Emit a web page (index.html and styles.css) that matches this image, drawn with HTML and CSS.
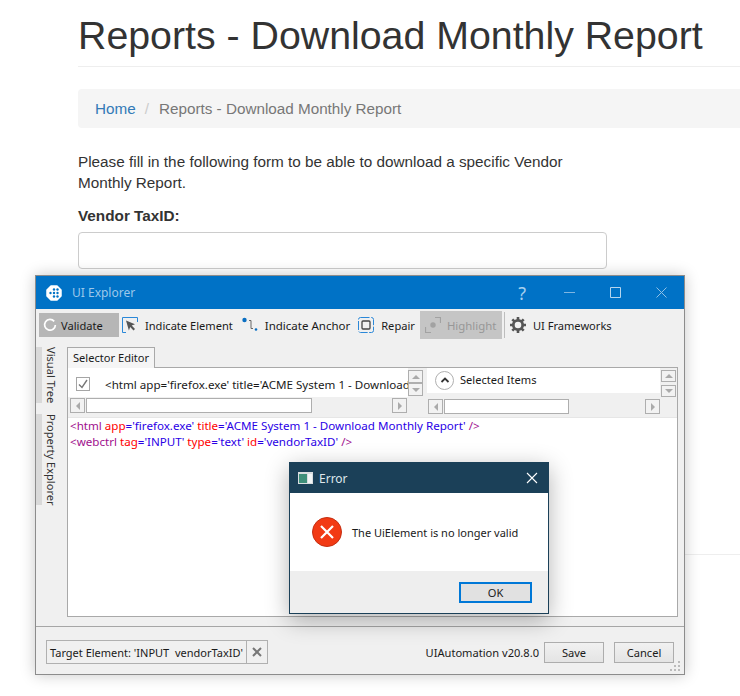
FILE: index.html
```html
<!DOCTYPE html>
<html lang="en">
<head>
<meta charset="utf-8">
<title>Reports - Download Monthly Report</title>
<link rel="stylesheet" href="styles.css">
</head>
<body>
<main class="page">
  <h1 class="page-title">Reports - Download Monthly Report</h1>
  <nav class="breadcrumb"><a class="crumb-link" href="#">Home</a><span class="crumb-sep">/</span><span class="crumb-current">Reports - Download Monthly Report</span></nav>
  <p class="intro">Please fill in the following form to be able to download a specific Vendor<br>Monthly Report.</p>
  <label class="field-label">Vendor TaxID:</label>
  <div class="field-input"></div>
</main>
<div class="page-rule"></div>

<section class="win explorer">
  <header class="titlebar">
    <svg class="app-logo" viewBox="0 0 16 16" width="16" height="16"><path d="M5 1h6l4 4v6l-4 4H5l-4-4V5z" fill="#fff" stroke="#fff" stroke-width="1.500" stroke-linejoin="round"/><g fill="#0072c6"><circle cx="8" cy="4.500" r="1.200"/><circle cx="11.500" cy="4.500" r="1.200"/><circle cx="4.500" cy="8" r="1.200"/><circle cx="8" cy="8" r="1.200"/><circle cx="11.500" cy="8" r="1.200"/><circle cx="8" cy="11.500" r="1.200"/><circle cx="11.500" cy="11.500" r="1.200"/></g></svg>
    <span class="win-title">UI Explorer</span>
    <span class="win-help">?</span>
    <svg class="win-ctl min" viewBox="0 0 11 11" width="11" height="11"><path d="M0 5.500h11" stroke="#7fb6e2" fill="none"/></svg>
    <svg class="win-ctl max" viewBox="0 0 11 11" width="11" height="11"><path d="M.5.500h10v10H.5z" stroke="#b5d5ee" fill="none"/></svg>
    <svg class="win-ctl close" viewBox="0 0 11 11" width="11" height="11"><path d="M.5.500l10 10M10.500.500l-10 10" stroke="#8fc0e6" fill="none"/></svg>
  </header>
  <div class="toolbar">
    <div class="tool tool-validate">
      <svg viewBox="0 0 14 14" width="14" height="14"><path d="M11.200 3.400A5.400 5.400 0 1 0 12.400 7" stroke="#fff" stroke-width="1.700" fill="none"/></svg>
      <span>Validate</span>
    </div>
    <div class="tool tool-element">
      <svg viewBox="0 0 16 16" width="16" height="16"><path d="M4 15.500H.5V.5h15V5" stroke="#2b88d8" fill="none"/><path d="M4 3.500l9 3.800-3.300 1.300 3.300 3.300-1.500 1.500-3.300-3.300-1.300 3.300z" fill="#555"/></svg>
      <span>Indicate Element</span>
    </div>
    <div class="tool tool-anchor">
      <svg viewBox="0 0 16 16" width="16" height="16"><circle cx="2.500" cy="3" r="2.200" fill="#0a6fc2"/><path d="M7 3.500h2v8h2" stroke="#666" fill="none"/><circle cx="14" cy="12.500" r="1.300" fill="#0a6fc2"/></svg>
      <span>Indicate Anchor</span>
    </div>
    <div class="tool tool-repair">
      <svg viewBox="0 0 16 16" width="16" height="16"><rect x=".5" y=".5" width="15" height="15" rx="2" stroke="#2b88d8" fill="none" stroke-dasharray="9 1.500"/><rect x="4" y="4" width="8" height="8" rx="1" stroke="#444" stroke-width="1.300" fill="none"/></svg>
      <span>Repair</span>
    </div>
    <div class="tool tool-highlight">
      <svg viewBox="0 0 16 16" width="16" height="16"><path d="M.5 10v5.500H6M10 .5h5.500V6" stroke="#a2a2a2" stroke-width="1.200" fill="none"/><circle cx="8" cy="8" r="2.700" fill="#a2a2a2"/></svg>
      <span>Highlight</span>
    </div>
    <div class="tool-sep"></div>
    <div class="tool tool-frameworks">
      <svg viewBox="0 0 16 16" width="16" height="16"><circle cx="8" cy="8" r="4.700" fill="none" stroke="#555" stroke-width="2.800"/><g stroke="#555" stroke-width="2.600"><path d="M8 0v3M8 13v3M0 8h3M13 8h3M2.300 2.300l2.100 2.100M11.600 11.600l2.100 2.100M13.700 2.300l-2.100 2.100M4.400 11.600l-2.100 2.100"/></g></svg>
      <span>UI Frameworks</span>
    </div>
  </div>
  <div class="explorer-body">
    <aside class="side-tabs">
      <div class="side-tab side-tree"><span>Visual Tree</span></div>
      <div class="side-tab side-prop"><span>Property Explorer</span></div>
    </aside>
    <div class="editor">
      <div class="tab">Selector Editor</div>
      <div class="editor-box">
        <div class="panes">
          <div class="pane pane-left">
            <div class="pane-row">
              <div class="row-white row-selector">
                <span class="check"><svg viewBox="0 0 14 14" width="14" height="14"><path d="M3 7.500l3 3 5-7.500" stroke="#777" stroke-width="1.400" fill="none"/></svg></span>
                <span class="selector-text">&lt;html app='firefox.exe' title='ACME System 1 - Download Monthly Report' /&gt;</span>
              </div>
              <div class="vscroll"><span class="sbtn"><i class="tri up"></i></span><span class="sbtn"><i class="tri down"></i></span></div>
            </div>
            <div class="hscroll hs-left"><span class="sbtn"><i class="tri left"></i></span><span class="thumb thumb-left"></span><span class="hs-fill"></span><span class="sbtn"><i class="tri right"></i></span></div>
          </div>
          <div class="pane pane-right">
            <div class="pane-row">
              <div class="row-white row-items">
                <span class="chev"><svg viewBox="0 0 10 8" width="10" height="8"><path d="M1.500 6l3.500-3.500L8.500 6" stroke="#333" stroke-width="1.800" fill="none"/></svg></span>
                <span class="items-label">Selected Items</span>
              </div>
              <div class="vscroll vs-right"><span class="sbtn"><i class="tri up"></i></span><span class="sbtn"><i class="tri down"></i></span></div>
            </div>
            <div class="hscroll hs-right"><span class="sbtn"><i class="tri left"></i></span><span class="thumb thumb-right"></span><span class="hs-fill"></span><span class="sbtn"><i class="tri right"></i></span></div>
          </div>
        </div>
        <div class="code">
          <div><b class="k-tag">&lt;html</b> <b class="k-attr">app</b><b class="k-val">='firefox.exe'</b> <b class="k-attr">title</b><b class="k-val">='ACME System 1 - Download Monthly Report'</b> <b class="k-tag">/&gt;</b></div>
          <div><b class="k-tag">&lt;webctrl</b> <b class="k-attr">tag</b><b class="k-val">='INPUT'</b> <b class="k-attr">type</b><b class="k-val">='text'</b> <b class="k-attr">id</b><b class="k-val">='vendorTaxID'</b> <b class="k-tag">/&gt;</b></div>
        </div>
      </div>
    </div>
  </div>
  <footer class="footer">
    <div class="target"><span class="target-text">Target Element: 'INPUT&nbsp; vendorTaxID'</span><span class="target-x"><svg viewBox="0 0 10 10" width="10" height="10"><path d="M1 1l8 8M9 1l-8 8" stroke="#777" stroke-width="2" fill="none"/></svg></span></div>
    <span class="version">UIAutomation v20.8.0</span>
    <button class="btn btn-save">Save</button>
    <button class="btn btn-cancel">Cancel</button>
    <svg class="grip" viewBox="0 0 10 10" width="10" height="10"><g fill="#bbb"><rect x="8" y="0" width="2" height="2"/><rect x="4" y="4" width="2" height="2"/><rect x="8" y="4" width="2" height="2"/><rect x="0" y="8" width="2" height="2"/><rect x="4" y="8" width="2" height="2"/><rect x="8" y="8" width="2" height="2"/></g></svg>
  </footer>
</section>

<section class="win dialog">
  <header class="dlg-title">
    <svg class="dlg-icon" viewBox="0 0 15 12" width="15" height="12"><rect width="15" height="12" fill="#d9dde0"/><rect x="1" y="2" width="8" height="9" fill="#3f8f7a"/><rect x="10" y="2" width="4" height="9" fill="#f2f5f6"/></svg>
    <span class="dlg-name">Error</span>
    <svg class="dlg-close" viewBox="0 0 12 12" width="12" height="12"><path d="M1 1l10 10M11 1l-10 10" stroke="#fff" stroke-width="1.100" fill="none"/></svg>
  </header>
  <div class="dlg-body">
    <svg class="err-icon" viewBox="0 0 30 30" width="30" height="30"><circle cx="15" cy="15" r="14.500" fill="#f23a14" stroke="#c42f12"/><path d="M9 9l12 12M21 9L9 21" stroke="#fff" stroke-width="2.200" fill="none"/></svg>
    <span class="dlg-msg">The UiElement is no longer valid</span>
  </div>
  <div class="dlg-foot"><button class="btn-ok">OK</button></div>
</section>
</body>
</html>
```
FILE: styles.css
```css
html, body { margin: 0; padding: 0; }
body {
  width: 740px; height: 696px; overflow: hidden; position: relative;
  background: #fff; color: #333;
  font-family: "Liberation Sans", Arial, sans-serif;
}
.page { padding-left: 78px; }
.page-title {
  margin: 0; box-sizing: border-box; padding-top: 14px; height: 67px;
  font-size: 39.300px; line-height: 43px; font-weight: 400; color: #333;
  border-bottom: 1px solid #eee;
}
.breadcrumb {
  margin-top: 22px; height: 39px; display: flex; align-items: center;
  padding-left: 17px; background: #f5f5f5; border-radius: 4px 0 0 4px;
  font-size: 15.250px;
}
.crumb-link { color: #337ab7; text-decoration: none; }
.crumb-sep { color: #ccc; margin: 0 10px 0 9px; }
.crumb-current { color: #777; }
.intro { margin: 23px 0 0; font-size: 15.300px; line-height: 21px; color: #333; }
.field-label { display: block; margin-top: 12px; font-size: 15.300px; line-height: 21px; font-weight: 700; }
.field-input {
  margin-top: 6px; width: 529px; height: 37px; box-sizing: border-box;
  border: 1px solid #ccc; border-radius: 4px; background: #fff;
}
.page-rule { position: absolute; left: 600px; right: 0; top: 554px; height: 1px; background: #eee; }

.win, .win button { font-family: "Noto Sans", "Open Sans", sans-serif; }
.win {
  position: absolute; box-sizing: border-box;
  font-size: 11.100px; color: #1a1a1a;
}
.explorer {
  left: 35px; top: 275px; width: 650px; height: 400px;
  border: 1px solid #8c8c8c; background: #f0f0f0;
  box-shadow: 0 0 14px rgba(0,0,0,.22);
  display: flex; flex-direction: column;
}
.titlebar {
  height: 33px; flex: none; background: #0072c6; display: flex; align-items: center;
  padding-left: 10px; color: #9cc8ea;
}
.win-title { margin-left: 10px; font-size: 12px; }
.win-help { margin-left: auto; font-size: 18px; line-height: 20px; color: #a6cfee; }
.win-ctl { flex: none; }
.min { margin-left: 38px; }
.max { margin-left: 35px; }
.close { margin-left: 35px; margin-right: 17px; }

.toolbar { height: 37px; box-sizing: border-box; padding: 0 0 5px 3px; flex: none; display: flex; align-items: center; }
.tool { display: flex; align-items: center; white-space: nowrap; box-sizing: border-box; }
.tool-validate { width: 80px; height: 24px; background: #b6b6b6; padding-left: 4px; gap: 4px; }
.tool-element { margin-left: 3px; gap: 7px; }
.tool-anchor { margin-left: 9px; gap: 7px; font-size: 11.500px; }
.tool-repair { margin-left: 8px; gap: 7px; }
.tool-highlight { margin-left: 5px; width: 82px; height: 28px; background: #c5c5c5; color: #979797; padding-left: 5px; gap: 6px; font-size: 11.400px; }
.tool-sep { width: 1px; height: 26px; background: #bdbdbd; margin-left: 2px; }
.tool-frameworks { margin-left: 5px; gap: 7px; }

.explorer-body { flex: 1; display: flex; min-height: 0; }
.side-tabs { width: 31px; flex: none; padding-top: 1px; }
.side-tab {
  box-sizing: border-box; width: 21px; padding-left: 3px; display: flex; align-items: center;
  border-left: 6px solid #d9d9d9; writing-mode: vertical-rl; white-space: nowrap; color: #333;
}
.side-tree { height: 56px; }
.side-prop { height: 91px; margin-top: 11px; }
.editor { flex: 1; margin-right: 6px; display: flex; flex-direction: column; min-width: 0; padding-top: 1px; }
.tab {
  align-self: flex-start; width: 88px; height: 21px; box-sizing: border-box; padding: 0 5px; line-height: 20px;
  white-space: nowrap; background: #f5f5f5; border: 1px solid #a9a9a9; border-bottom: 0;
  position: relative; z-index: 1; margin-bottom: -1px;
}
.editor-box { height: 251px; box-sizing: border-box; border: 1px solid #a9a9a9; display: flex; flex-direction: column; background: #f0f0f0; }
.panes { height: 47px; flex: none; display: flex; }
.pane { box-sizing: border-box; }
.pane-left { width: 359px; }
.pane-right { width: 250px; }
.pane-row { display: flex; height: 29px; }
.row-white { background: #fff; display: flex; align-items: center; flex: 1; min-width: 0; overflow: hidden; white-space: nowrap; }
.row-selector { padding: 3px 0 0 8px; }
.check { width: 14px; height: 14px; box-sizing: border-box; border: 1px solid #a5a5a5; flex: none; display: flex; background: #fff; margin-right: 15px; }
.check svg { margin: -1px; }
.selector-text { flex: none; font-size: 11.600px; }
.row-items { height: 25px; padding-left: 8px; gap: 6px; }
.items-label { margin-top: -3px; }
.chev { width: 19px; height: 19px; box-sizing: border-box; border: 1px solid #b0b0b0; border-radius: 50%; display: flex; align-items: center; justify-content: center; flex: none; margin-top: -1px; }
.vscroll { width: 15px; padding: 2px 1px 0; flex: none; display: flex; flex-direction: column; }
.pane-left .vscroll { margin-right: 3px; padding-left: 0; }
.vs-right { gap: 3px; }
.sbtn { width: 15px; height: 13px; box-sizing: border-box; border: 1px solid #aeaeae; background: #f2f2f2; display: flex; align-items: center; justify-content: center; flex: none; }
.vs-right .sbtn { height: 12px; }
.hscroll .sbtn { height: 15px; }
.tri { width: 0; height: 0; border: 4px solid transparent; display: block; }
.tri.up { border-bottom-color: #aaa; border-top-width: 0; }
.tri.down { border-top-color: #aaa; border-bottom-width: 0; }
.tri.left { border-right-color: #aaa; border-left-width: 0; }
.tri.right { border-left-color: #aaa; border-right-width: 0; }
.hscroll { display: flex; height: 15px; margin-top: 1px; }
.hs-left { padding-left: 2px; width: 337px; }
.hs-right { padding-left: 1px; width: 232px; margin-top: 2px; }
.thumb { height: 15px; box-sizing: border-box; border: 1px solid #aeaeae; background: #fff; margin-left: 1px; flex: none; }
.thumb-left { width: 226px; }
.thumb-right { width: 125px; }
.hs-fill { flex: 1; }
.code {
  flex: 1; margin-top: 2px; background: #fff; border-top: 1px solid #e6e6e6;
  padding: 0 2px; font-size: 11.600px; line-height: 16px; white-space: nowrap;
}
.code b { font-weight: 400; }
.k-tag { color: #a0108e; }
.k-attr { color: #f00; }
.k-val { color: #2a00e6; }

.footer {
  height: 48px; flex: none; box-sizing: border-box; margin-top: 9px; border-top: 1px solid #a6a6a6;
  display: flex; align-items: flex-start; padding: 13px 10px 0; position: relative;
}
.target { height: 24px; box-sizing: border-box; border: 1px solid #b0b0b0; display: flex; align-items: center; font-size: 11px; }
.target-text { padding: 1px 3px 0; white-space: nowrap; border-right: 1px solid #b0b0b0; line-height: 21px; }
.target-x { width: 20px; display: flex; justify-content: center; }
.version { margin: 5px 0 0 auto; white-space: nowrap; }
.btn {
  height: 21px; width: 60px; box-sizing: border-box; padding: 0; margin-top: 2px;
  border: 1px solid #adadad; background: linear-gradient(#f1f1f1, #e4e4e4); font-size: 11.100px; color: #1a1a1a;
}
.btn-save { margin-left: 5px; }
.btn-cancel { margin-left: 10px; }
.grip { position: absolute; right: 4px; bottom: 3px; }

.dialog {
  left: 289px; top: 462px; width: 260px; height: 152px;
  border: 1px solid #1b4058; background: #fff;
  box-shadow: 0 6px 22px rgba(0,0,0,.3);
  display: flex; flex-direction: column;
}
.dlg-title { height: 30px; flex: none; background: #1b4058; display: flex; align-items: center; padding: 0 10px 0 8px; color: #dfe7ec; }
.dlg-name { margin-left: 6px; font-size: 12px; }
.dlg-close { margin-left: auto; }
.dlg-body { height: 78px; flex: none; display: flex; align-items: center; padding-left: 22px; gap: 10px; }
.dlg-msg { font-size: 11px; }
.dlg-foot { flex: 1; background: #eee; display: flex; justify-content: flex-end; align-items: center; padding-right: 16px; }
.btn-ok { width: 73px; height: 21px; box-sizing: border-box; border: 2px solid #0078d7; background: #e1e1e1; padding: 0; font-size: 11.100px; color: #1a1a1a; }
```
